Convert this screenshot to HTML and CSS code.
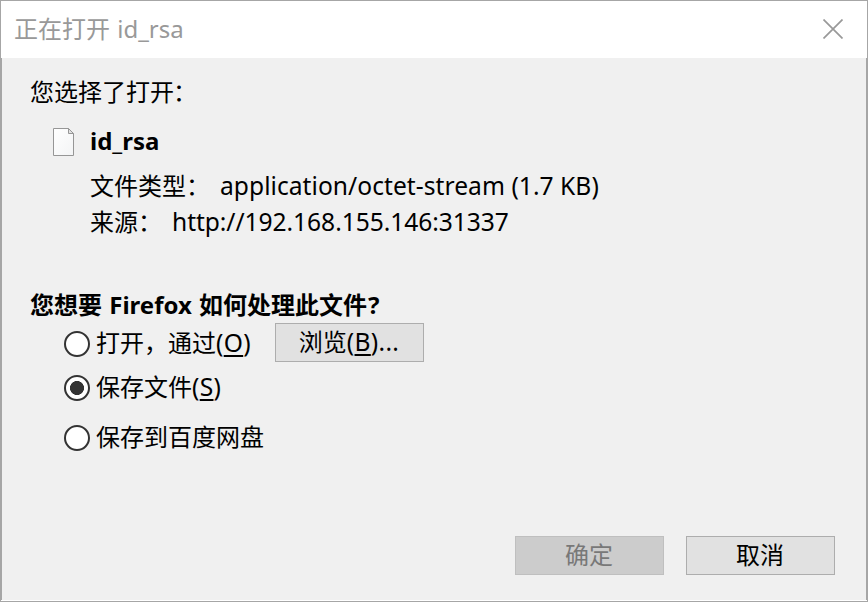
FILE: index.html
```html
<!DOCTYPE html>
<html lang="zh-CN">
<head>
<meta charset="utf-8">
<title>正在打开 id_rsa</title>
<link rel="stylesheet" href="styles.css">
</head>
<body>
<div class="dialog">
  <header class="titlebar">
    <span class="title">正在打开 <span class="title-file">id_rsa</span></span>
    <svg class="close" width="20" height="20" viewBox="0 0 20 20"><path d="M.5.5 19.5 19.5M19.5.5.5 19.5"/></svg>
  </header>
  <main class="content">
    <p class="intro">您选择了打开<span class="colon">：</span></p>
    <div class="file">
      <svg class="file-icon" width="22" height="28" viewBox="0 0 22 28">
        <defs><linearGradient id="paper" x1="0" y1="0" x2="1" y2="1"><stop offset="0" stop-color="#fff"/><stop offset="1" stop-color="#f3f4f5"/></linearGradient></defs>
        <path d="M.5.5H15.5L20.5 5.5V27.5H.5Z" fill="url(#paper)" stroke="#969696"/>
        <path d="M15.5.5V5.5H20.5Z" fill="#e2e2e2" stroke="#969696"/>
      </svg>
      <strong class="file-name">id_rsa</strong>
    </div>
    <div class="meta"><span class="label type-label">文件类型：</span><span class="mime">application/octet-stream (1.7 KB)</span></div>
    <div class="meta"><span class="label source-label">来源：</span><span class="url">http://192.168.155.146:31337</span></div>
    <h1 class="question">您想要 <span class="brand">Firefox</span> 如何处理此文件<span class="mark">?</span></h1>
    <div class="option open"><i class="radio"></i><span class="option-text">打开，通过<span class="key">(<u>O</u>)</span></span><button class="button browse"><span>浏览<span class="key">(<u>B</u>)...</span></span></button></div>
    <div class="option save"><i class="radio checked"></i><span class="option-text">保存文件<span class="key">(<u>S</u>)</span></span></div>
    <div class="option cloud"><i class="radio"></i><span class="option-text">保存到百度网盘</span></div>
    <footer class="actions">
      <button class="button disabled" disabled>确定</button>
      <button class="button">取消</button>
    </footer>
  </main>
</div>
</body>
</html>
```
FILE: styles.css
```css
* { box-sizing: border-box; }
body { margin: 0; }
.dialog {
  width: 868px;
  height: 602px;
  display: flex;
  flex-direction: column;
  border: 1px solid #a6a6a6;
  background: #fff;
  color: #000;
  font: 24px/36px "Noto Sans", "Noto Sans CJK SC", sans-serif;
  white-space: nowrap;
}
.titlebar {
  height: 57px;
  display: flex;
  align-items: center;
  justify-content: space-between;
  padding: 0 24px 2px 13px;
  color: #999;
}
.title-file { margin-left: 1px; }
.close { fill: none; stroke: #999; stroke-width: 1.7; }
.content {
  height: 542px;
  display: flex;
  flex-direction: column;
  padding: 16px 31px 25px 28px;
  border: solid #a6a6a6;
  border-width: 0 1px;
  background: #f0f0f0;
}
.intro { margin: 0; height: 36px; }
.colon { margin-left: -1px; }
.file { display: flex; align-items: center; gap: 15px; height: 36px; margin: 14px 0 8px 23px; }
.file-name { margin-top: -2px; }
.meta { display: flex; height: 36px; padding-left: 60px; }
.type-label { width: 130px; }
.source-label { width: 82px; }
.mime { font-size: 24.6px; letter-spacing: .04px; }
.url { font-size: 24.6px; letter-spacing: -.06px; }
.question { margin: 47px 0 0; height: 36px; font-size: 24px; font-weight: 700; }
.brand { margin: 0 1px; }
.mark { margin-left: 1px; }
.option { display: flex; align-items: center; height: 39px; padding-left: 34px; }
.save { margin-top: 6px; }
.cloud { margin-top: 11px; }
.radio {
  width: 26px;
  height: 26px;
  margin-right: 6px;
  border: 2px solid #333;
  border-radius: 50%;
  background: #fff;
}
.open .radio { margin-top: 2px; }
.checked { background: radial-gradient(circle, #333 6.7px, #fff 7.3px); }
.option-text { margin-top: -1px; }
.key { font-size: 24.6px; letter-spacing: .3px; }
u { text-decoration-thickness: 2px; text-underline-offset: 3px; }
.open .option-text { width: 179px; margin-top: 0; }
.button {
  width: 149px;
  height: 39px;
  padding: 0 1px 1px 0;
  border: 1px solid #adadad;
  border-radius: 0;
  background: #e1e1e1;
  color: #000;
  font: inherit;
}
.disabled { border-color: #bfbfbf; background: #ccc; color: #787878; }
.actions { display: flex; justify-content: flex-end; gap: 22px; margin-top: auto; }
```
